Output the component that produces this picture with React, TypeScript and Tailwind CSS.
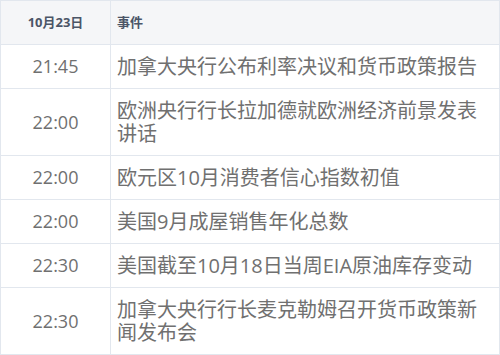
const ROWS = [
  { time: "21:45", text: "加拿大央行公布利率决议和货币政策报告" },
  { time: "22:00", text: "欧洲央行行长拉加德就欧洲经济前景发表讲话" },
  { time: "22:00", text: "欧元区10月消费者信心指数初值" },
  { time: "22:00", text: "美国9月成屋销售年化总数" },
  { time: "22:30", text: "美国截至10月18日当周EIA原油库存变动" },
  { time: "22:30", text: "加拿大央行行长麦克勒姆召开货币政策新闻发布会" },
];

const FONT = { fontFamily: '"Open Sans", "Noto Sans CJK SC", sans-serif' };

export default function App() {
  return (
    <div className="w-[500px] h-[355px] bg-white overflow-hidden" style={FONT}>
      <table className="w-[500px] border-collapse table-fixed">
        <colgroup>
          <col className="w-[110px]" />
          <col />
        </colgroup>
        <thead>
          <tr className="bg-[#f5f6f8] h-[44px]">
            <th className="border border-[#e2e7ee] text-[13px] font-bold text-[#4b5567] text-center">
              10月23日
            </th>
            <th className="border border-[#e2e7ee] text-[13px] font-bold text-[#4b5567] text-left pl-[6px]">
              事件
            </th>
          </tr>
        </thead>
        <tbody>
          {ROWS.map((r, i) => (
            <tr key={i}>
              <td className="border border-[#e2e7ee] text-center text-[18px] text-[#707070] h-[44px]">
                {r.time}
              </td>
              <td className="border border-[#e2e7ee] text-[20px] leading-[23px] text-[#707070] py-[10px] pl-[6px] pr-[10px]">
                {r.text}
              </td>
            </tr>
          ))}
        </tbody>
      </table>
    </div>
  );
}
